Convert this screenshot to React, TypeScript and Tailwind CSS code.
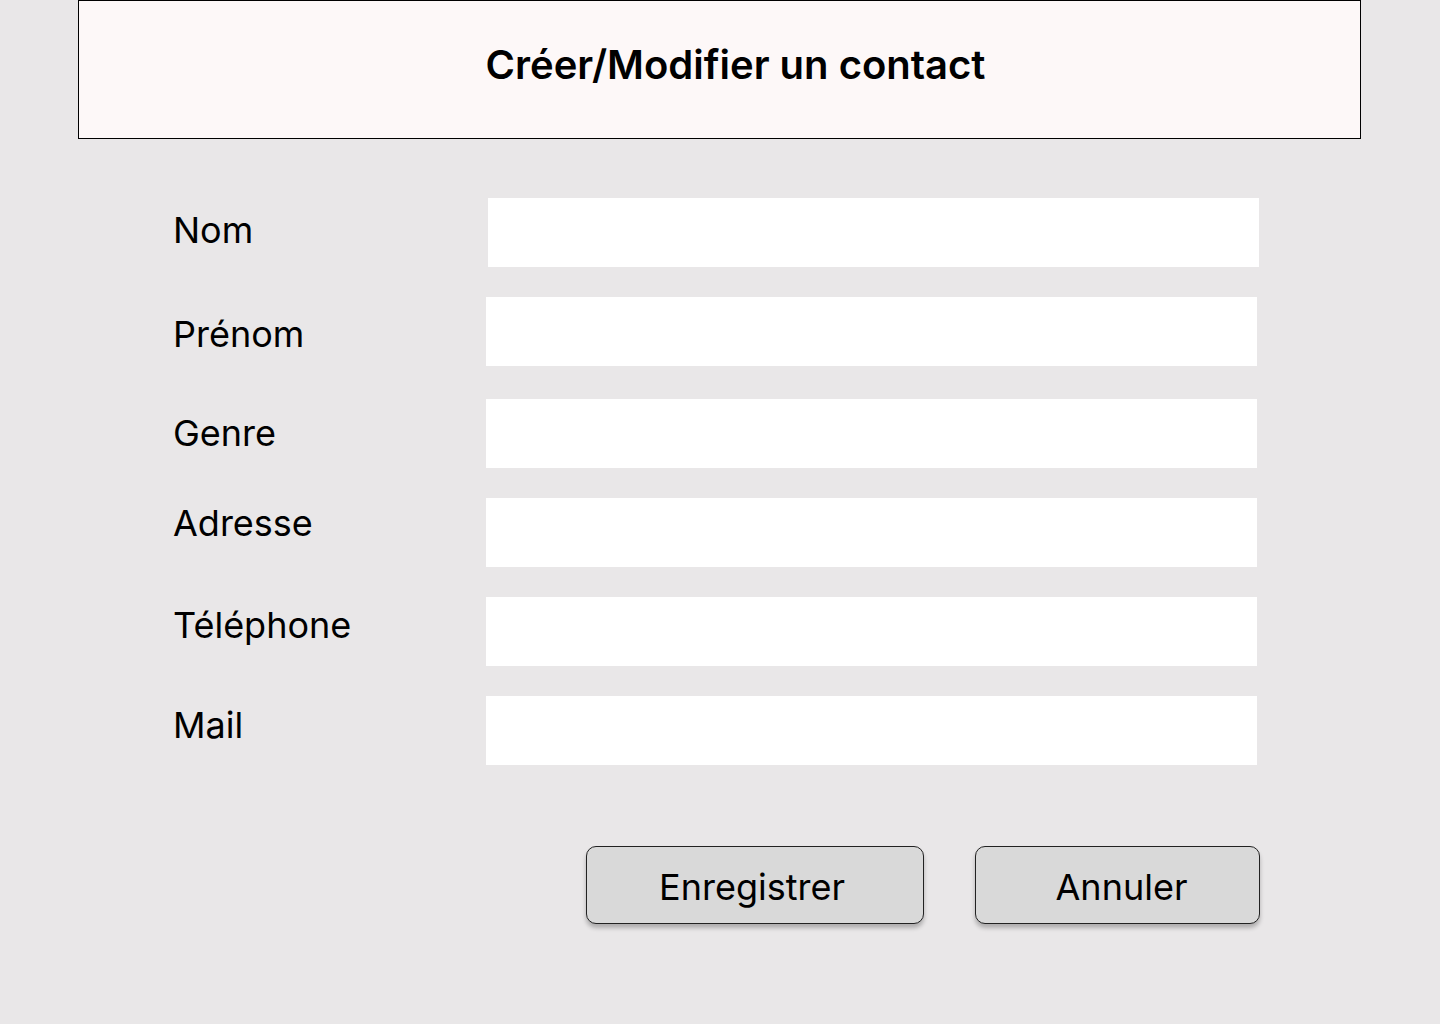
import React from "react";

const rows: { label: string; pt: string; mt: string; ml: string }[] = [
  { label: "Nom", pt: "pt-[10px]", mt: "mt-[198px]", ml: "ml-[2px]" },
  { label: "Prénom", pt: "pt-[15px]", mt: "mt-[30px]", ml: "ml-0" },
  { label: "Genre", pt: "pt-[12px]", mt: "mt-[33px]", ml: "ml-0" },
  { label: "Adresse", pt: "pt-[3px]", mt: "mt-[30px]", ml: "ml-0" },
  { label: "Téléphone", pt: "pt-[6px]", mt: "mt-[30px]", ml: "ml-0" },
  { label: "Mail", pt: "pt-[7px]", mt: "mt-[30px]", ml: "ml-0" },
];

export default function App() {
  return (
    <div
      className="relative min-h-screen w-[1440px] bg-[#e9e7e8] text-black"
      style={{ fontFamily: "Inter, 'Noto Sans', sans-serif" }}
    >
      <div className="absolute left-[78px] top-0 flex h-[139px] w-[1283px] items-center justify-center border border-black bg-[#fdf8f8] pl-[32px]">
        <h1 className="text-[40px] font-semibold leading-none tracking-[0px] -mt-[9px]">
          Créer/Modifier un contact
        </h1>
      </div>

      <div className="flex flex-col pl-[173px]">
        {rows.map((r) => (
          <div key={r.label} className={`flex items-start ${r.mt}`}>
            <div className={`w-[313px] text-[36px] leading-[44px] ${r.pt}`}>
              {r.label}
            </div>
            <div className={`h-[69px] w-[771px] bg-white ${r.ml}`} />
          </div>
        ))}

        <div className="mt-[81px] flex pl-[413px]">
          <button className="h-[78px] w-[338px] rounded-[10px] border border-[#222] bg-[#d9d9d9] pr-[6px] pt-[3px] text-[36px] leading-none shadow-[0_4px_4px_rgba(0,0,0,0.25)]">
            Enregistrer
          </button>
          <button className="ml-[51px] h-[78px] w-[285px] rounded-[10px] border border-[#222] bg-[#d9d9d9] pl-[8px] pt-[3px] text-[36px] leading-none shadow-[0_4px_4px_rgba(0,0,0,0.25)]">
            Annuler
          </button>
        </div>
      </div>
    </div>
  );
}
